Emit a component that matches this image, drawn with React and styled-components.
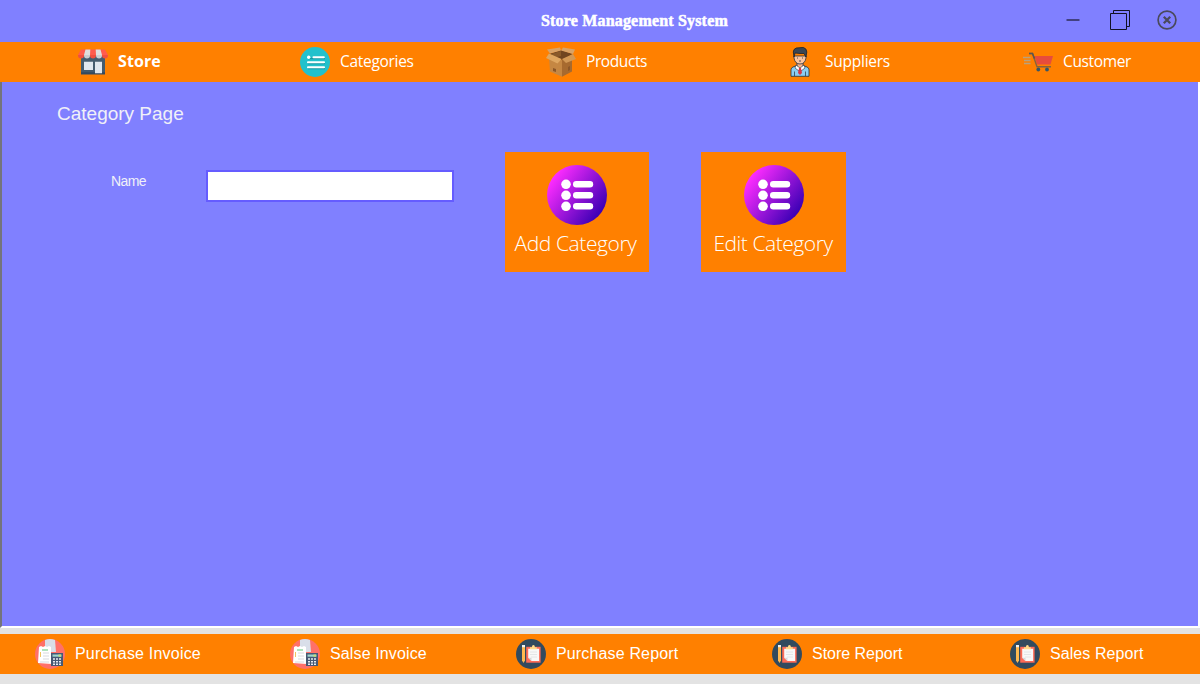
import React from "react";
import styled, { createGlobalStyle } from "styled-components";

const GlobalStyle = createGlobalStyle`
  *, *::before, *::after { box-sizing: border-box; }
  html, body { margin: 0; padding: 0; }
  body { background: #e3e3e3; overflow: hidden; }
  svg { display: block; flex: none; }
`;

const Window = styled.div`
  width: 1200px;
  height: 684px;
  display: flex;
  flex-direction: column;
  background: #e3e3e3;
  color: #fff;
`;

const TitleBar = styled.header`
  height: 42px;
  flex: none;
  display: flex;
  align-items: flex-start;
  background: #8080ff;
  padding-left: 541px;
`;

const Title = styled.h1`
  margin: 0;
  padding-top: 11px;
  width: 524px;
  font: 700 16px/20px "Liberation Serif", serif;
  letter-spacing: 0.18px;
  -webkit-text-stroke: 0.5px #fff;
  white-space: nowrap;
`;

const WindowControls = styled.div`
  display: flex;
  gap: 29px;
  padding-top: 10px;

  svg:last-child { margin-left: -2px; }
`;

const Bar = styled.nav`
  height: 40px;
  flex: none;
  display: grid;
  align-items: center;
  grid-template-columns: ${(p) => p.$columns};
  padding-left: ${(p) => p.$start}px;
  background: #ff8000;
`;

const BarItem = styled.a`
  display: flex;
  align-items: center;
  gap: 10px;
  height: 40px;
  white-space: nowrap;
`;

const MenuLabel = styled.span`
  font: ${(p) => (p.$active ? "700 16px/22px" : "400 15.5px/22px")} "Open Sans", "Noto Sans", sans-serif;
  letter-spacing: ${(p) => p.$spacing}px;
  padding-bottom: 2px;
`;

const ReportLabel = styled.span`
  font: 400 16px/20px "Liberation Sans", Arial, sans-serif;
  letter-spacing: ${(p) => p.$spacing}px;
`;

const Page = styled.main`
  height: 546px;
  flex: none;
  margin-bottom: 6px;
  background: #8080ff;
  border-left: 2px solid #74747c;
  border-right: 2px solid #fff;
  border-bottom: 2px solid #fff;
`;

const PageTitle = styled.h2`
  margin: 0;
  padding: 20px 0 0 55px;
  color: #f0f0f8;
  font: 400 19px/24px "Liberation Sans", Arial, sans-serif;
`;

const Form = styled.form`
  display: flex;
  align-items: flex-start;
  padding: 26px 0 0 109px;
`;

const FieldLabel = styled.label`
  width: 95px;
  padding-top: 20px;
  color: #f0f0f8;
  font: 400 14px/18px "Liberation Sans", Arial, sans-serif;
  letter-spacing: -0.6px;
`;

const NameInput = styled.input`
  width: 248px;
  height: 32px;
  margin: 18px 51px 0 0;
  padding: 0 6px;
  border: 2px solid #655cff;
  border-radius: 0;
  background: #fff;
  outline: none;
`;

const ActionButton = styled.button`
  width: ${(p) => p.$width}px;
  height: 120px;
  margin: 0 ${(p) => p.$gap}px 0 0;
  padding: 13px 1px 0 ${(p) => p.$inset}px;
  border: 0;
  display: flex;
  flex-direction: column;
  align-items: center;
  background: #ff8000;
  color: #fff;
`;

const ActionLabel = styled.span`
  margin: 4px 2px 0 0;
  font: 300 21px/28px "Open Sans", "Noto Sans", sans-serif;
  letter-spacing: ${(p) => p.$spacing}px;
  white-space: nowrap;
`;

const StoreIcon = () => (
  <svg width="30" height="30" viewBox="0 0 30 30">
    <path d="M3 9h24v18.3H3z" fill="#445b6e" />
    <path d="M3 25.3h24v2H3z" fill="#34495e" />
    <path d="M6 14.7h9V23H6zM17 14.7h7v11.6h-7z" fill="#dfe6ee" />
    <path d="M3 2.500h24l3 5.500H0z" fill="#ff5b4d" />
    <path d="M7.500 2.500h4.800L12 8H6zM17.700 2.500h4.800L24 8h-6z" fill="#dedede" />
    <path d="M0 8h6v.500a3 3 0 0 1-6 0M12 8h6v.500a3 3 0 0 1-6 0M24 8h6v.500a3 3 0 0 1-6 0" fill="#f04f40" />
    <path d="M6 8h6v.500a3 3 0 0 1-6 0M18 8h6v.500a3 3 0 0 1-6 0" fill="#c9cdd2" />
  </svg>
);

const CategoriesIcon = () => (
  <svg width="30" height="30" viewBox="0 0 30 30">
    <circle cx="15" cy="15" r="15" fill="#22c1cc" />
    <path d="M8 11.6h17M8 16.6h17M8 21.6h17" stroke="#1598a2" strokeWidth="1.5" />
    <circle cx="8.7" cy="10.2" r="1.7" fill="#fff" />
    <path d="M13.5 10.2h10.3M8 15.2h16M8 20.2h16" stroke="#fff" strokeWidth="2.1" strokeLinecap="round" />
  </svg>
);

const BoxIcon = () => (
  <svg width="30" height="30" viewBox="0 0 30 30">
    <path d="M3 7l12-4 12 4-11 6z" fill="#704520" />
    <path d="M5 7l10-3v5l-7 2z" fill="#8a5a2a" />
    <path d="M3 10l13 3v16.7L4 24.5z" fill="#c58743" />
    <path d="M16 13l10-4v15.5l-10 5.2z" fill="#a76a2f" />
    <path d="M3 6.5L15.5 12l-4 4.5L0 11z" fill="#dfa761" />
    <path d="M16 12l11-5 3 5-10 4z" fill="#d29855" />
    <path d="M4 6.5L1 2.5l13-2 1 3zM15 3.5l2-3 12 2-2 4.5z" fill="#d9a367" />
    <path d="M7 21l3 1v3l-3-1zM22 20l2-1v4l-2 1z" fill="#8c5728" />
  </svg>
);

const SupplierIcon = () => (
  <svg width="30" height="30" viewBox="0 0 30 30">
    <path d="M6 29.3v-6.5q0-2 2-2.800l4.500-1.800h5L22 20q2 .8 2 2.800v6.500z" fill="#8acdf2" stroke="#24303d" strokeWidth=".8" />
    <path d="M12 15h6v4l-3 4-3-4z" fill="#f6b58f" stroke="#24303d" strokeWidth=".8" />
    <path d="M11 18l4 3 4-3 1 3-4 3-1-2-1 2-4-3z" fill="#fff" stroke="#24303d" strokeWidth=".6" />
    <path d="M14 21h2l1 5-2 2-2-2z" fill="#d8374a" />
    <path d="M9 9h12v2q-1 6-6 6t-6-6z" fill="#fac5a2" stroke="#24303d" strokeWidth=".8" />
    <path d="M9 10L8.300 5q0-3 3-4l7-.6q3.500 1 3.500 4.600L21 10l-2-3.500h-4L10 6z" fill="#3a4654" stroke="#17212c" strokeWidth=".8" />
    <path d="M9.500 24.500v4.500M20.500 24.500v4.500" stroke="#24303d" strokeWidth=".7" />
    <path d="M12 11h1M17 11h1M14 14h2" stroke="#24303d" strokeWidth=".8" />
  </svg>
);

const CartIcon = () => (
  <svg width="30" height="30" viewBox="0 0 30 30">
    <path d="M0 10.500h7.500M1 13.500h6.500M1 16.500h6.500" stroke="#b9a17c" strokeWidth="1.400" />
    <path d="M11.500 9H30l-2.500 8.500H14z" fill="#e74c3c" />
    <path d="M6 6.500h3.500l4.500 13.300h14" fill="none" stroke="#87613d" strokeWidth="1.400" />
    <path d="M6 6.500h3.500l2 5" fill="none" stroke="#5a5650" strokeWidth="1.500" />
    <circle cx="15.300" cy="22.500" r="1.900" fill="#34566b" />
    <circle cx="24" cy="22.500" r="1.900" fill="#34566b" />
  </svg>
);

const InvoiceIcon = () => (
  <svg width="30" height="30" viewBox="0 0 30 30">
    <circle cx="15" cy="15" r="15" fill="#ff7069" />
    <path d="M10 1q5-2 10 0l1 12H10z" fill="#d9dee9" />
    <path d="M4 8l2-1 2 1 2-1 2 1 2-1 2 1v16l1 1-14-1z" fill="#fff" />
    <path d="M7 11h6" stroke="#7bd090" strokeWidth="1.2" />
    <path d="M8 14h6M8 17h6M8 20h6M5 23h9" stroke="#d8d9df" />
    <path d="M5.500 13v5" stroke="#f2c35f" />
    <path d="M16 14h12v13H16z" fill="#465974" />
    <path d="M17.500 15.500h9v2.200h-9z" fill="#9dd5ce" />
    <path d="M18 20h8M18 22.700h8M18 25.300h8" stroke="#e6eaf0" strokeWidth="1.600" strokeDasharray="2 1" />
    <path d="M23.500 15.500h2.500v2.200h-2.500z" fill="#c6de79" />
  </svg>
);

const ReportIcon = () => (
  <svg width="30" height="30" viewBox="0 0 30 30">
    <circle cx="15" cy="15" r="15" fill="#324a5e" />
    <path d="M6 8h3v13.500L7.500 24 6 21.500z" fill="#ffb94f" />
    <path d="M6 6h3v2.200H6z" fill="#f1f2f2" />
    <path d="M10.200 7.800h14.400v15.900H10.200z" fill="#fd6b57" />
    <path d="M12.200 9.800h10.900V22h-7.600l-3.300-3.300z" fill="#f8f8f8" />
    <path d="M12.200 18.700h3.300V22z" fill="#d5d7d9" />
    <path d="M14 10.300V8.200h1.900q0-2.200 1.500-2.200t1.500 2.200h1.900v2.100z" fill="#ffdc8a" />
    <path d="M14 13h7M14 15.500h7M15 18h6" stroke="#dedfe2" strokeWidth=".8" />
  </svg>
);

const ListBadgeIcon = ({ id }) => (
  <svg width="60" height="60" viewBox="0 0 60 60">
    <defs>
      <linearGradient id={id} x1="0.1" y1="0.2" x2="0.9" y2="0.8">
        <stop offset="0" stopColor="#ff2cff" />
        <stop offset="1" stopColor="#3b00b5" />
      </linearGradient>
    </defs>
    <circle cx="30" cy="30" r="30" fill={`url(#${id})`} />
    {[19.3, 30.3, 41.3].map((y) => (
      <g key={y} fill="#fff">
        <circle cx="19" cy={y} r="4.8" />
        <rect x="26" y={y - 3.2} width="20.2" height="6.4" rx="3.2" />
      </g>
    ))}
  </svg>
);

const MinimizeIcon = () => (
  <svg width="16" height="20" viewBox="0 0 16 20">
    <path d="M1.5 10h13" stroke="#424180" strokeWidth="2" />
  </svg>
);

const RestoreIcon = () => (
  <svg width="20" height="20" viewBox="0 0 20 20">
    <path d="M.5 3.5h16v16H.5zM3.5 3V.5h16v16H17" fill="none" stroke="#121224" />
  </svg>
);

const CloseIcon = () => (
  <svg width="20" height="20" viewBox="0 0 20 20">
    <circle cx="10" cy="10" r="8.900" fill="none" stroke="#4a4a5c" strokeWidth="1.700" />
    <path d="M6.800 6.800l6.400 6.400M13.200 6.800l-6.400 6.400" stroke="#4a4a5c" strokeWidth="2.300" />
  </svg>
);

const menu = [
  { label: "Store", Icon: StoreIcon, active: true, spacing: 0.1 },
  { label: "Categories", Icon: CategoriesIcon, spacing: -0.3 },
  { label: "Products", Icon: BoxIcon, spacing: -0.4 },
  { label: "Suppliers", Icon: SupplierIcon, spacing: -0.25 },
  { label: "Customer", Icon: CartIcon, spacing: -0.35 },
];

const reports = [
  { label: "Purchase Invoice", Icon: InvoiceIcon, spacing: 0.2 },
  { label: "Salse Invoice", Icon: InvoiceIcon, spacing: 0.13 },
  { label: "Purchase Report", Icon: ReportIcon, spacing: 0.15 },
  { label: "Store Report", Icon: ReportIcon, spacing: -0.03 },
  { label: "Sales Report", Icon: ReportIcon, spacing: 0.08 },
];

export default function App() {
  return (
    <Window>
      <GlobalStyle />
      <TitleBar>
        <Title>Store Management System</Title>
        <WindowControls>
          <MinimizeIcon />
          <RestoreIcon />
          <CloseIcon />
        </WindowControls>
      </TitleBar>
      <Bar $start={78} $columns="222px 246px 239px 238px 1fr">
        {menu.map(({ label, Icon, active, spacing }) => (
          <BarItem key={label}>
            <Icon />
            <MenuLabel $active={active} $spacing={spacing}>{label}</MenuLabel>
          </BarItem>
        ))}
      </Bar>
      <Page>
        <PageTitle>Category Page</PageTitle>
        <Form>
          <FieldLabel htmlFor="category-name">Name</FieldLabel>
          <NameInput id="category-name" />
          <ActionButton type="button" $width={144} $gap={52} $inset={0}>
            <ListBadgeIcon id="add-badge" />
            <ActionLabel $spacing={-0.4}>Add Category</ActionLabel>
          </ActionButton>
          <ActionButton type="button" $width={145} $gap={0} $inset={2}>
            <ListBadgeIcon id="edit-badge" />
            <ActionLabel $spacing={-0.45}>Edit Category</ActionLabel>
          </ActionButton>
        </Form>
      </Page>
      <Bar $start={35} $columns="255px 226px 256px 238px 1fr">
        {reports.map(({ label, Icon, spacing }) => (
          <BarItem key={label}>
            <Icon />
            <ReportLabel $spacing={spacing}>{label}</ReportLabel>
          </BarItem>
        ))}
      </Bar>
    </Window>
  );
}
